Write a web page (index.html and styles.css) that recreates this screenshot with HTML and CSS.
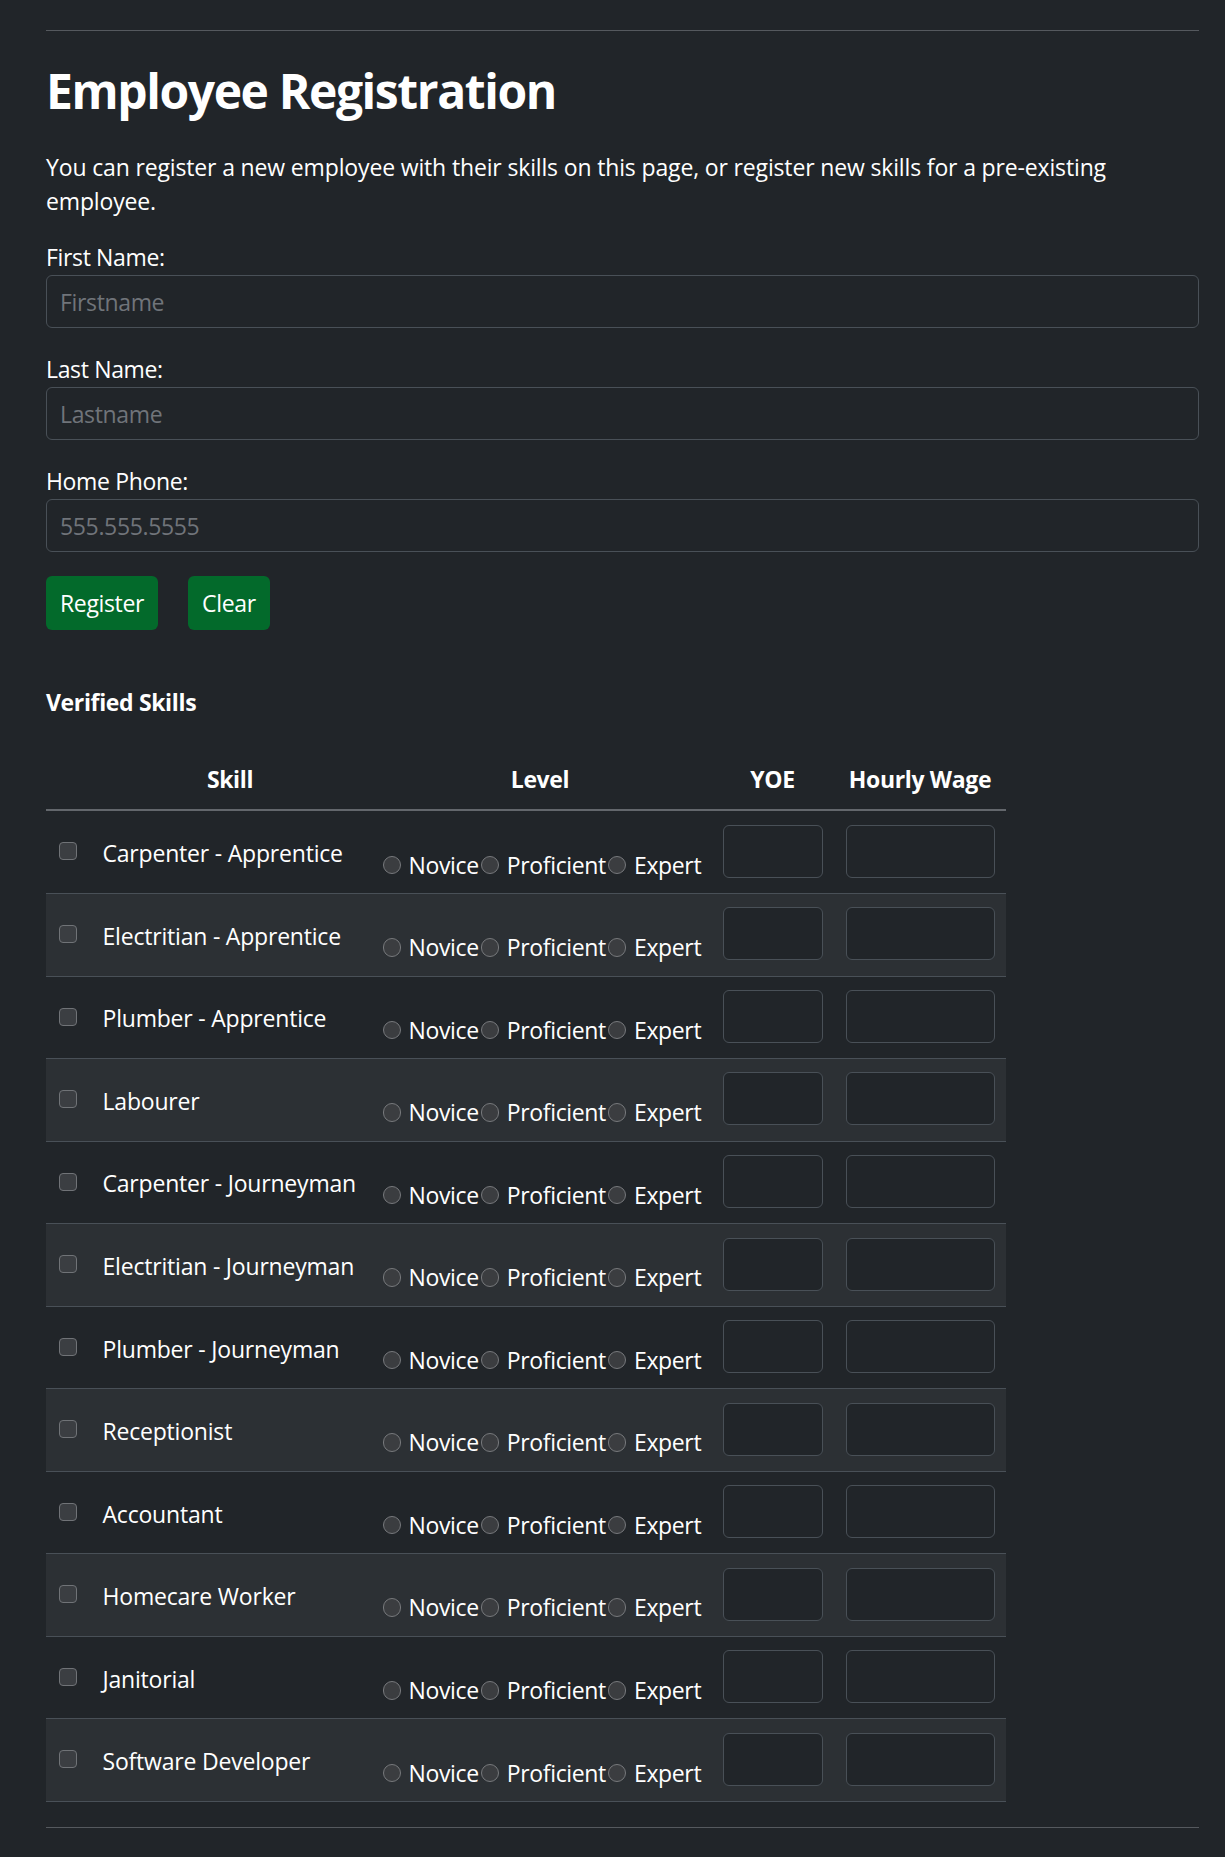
FILE: index.html
```html
<!DOCTYPE html>
<html lang="en">
<head>
<meta charset="utf-8">
<title>Employee Registration</title>
<link rel="stylesheet" href="styles.css">
</head>
<body>
<main class="page">
  <hr class="rule">
  <h1 class="title">Employee Registration</h1>
  <p class="intro">You can register a new employee with their skills on this page, or register new skills for a pre-existing employee.</p>
  <form class="reg">
    <div class="field">
      <label class="field-label" for="fn">First Name:</label>
      <input id="fn" class="text-input" type="text" placeholder="Firstname">
    </div>
    <div class="field">
      <label class="field-label" for="ln">Last Name:</label>
      <input id="ln" class="text-input" type="text" placeholder="Lastname">
    </div>
    <div class="field">
      <label class="field-label" for="ph">Home Phone:</label>
      <input id="ph" class="text-input" type="text" placeholder="555.555.5555">
    </div>
    <div class="actions">
      <button type="button" class="btn">Register</button>
      <button type="button" class="btn">Clear</button>
    </div>
    <h5 class="section-title">Verified Skills</h5>
    <table class="skills">
      <colgroup>
        <col class="c-check"><col class="c-skill"><col class="c-level"><col class="c-yoe"><col class="c-wage">
      </colgroup>
      <thead>
        <tr><th></th><th>Skill</th><th>Level</th><th>YOE</th><th>Hourly Wage</th></tr>
      </thead>
      <tbody>
        <tr><td class="t-check"><input type="checkbox" class="cb"></td><td class="t-skill">Carpenter - Apprentice</td><td class="t-level"><label class="opt"><input type="radio" name="l1">Novice</label><label class="opt"><input type="radio" name="l1">Proficient</label><label class="opt"><input type="radio" name="l1">Expert</label></td><td class="t-input"><input class="cell-input" type="text"></td><td class="t-input"><input class="cell-input" type="text"></td></tr>
        <tr><td class="t-check"><input type="checkbox" class="cb"></td><td class="t-skill">Electritian - Apprentice</td><td class="t-level"><label class="opt"><input type="radio" name="l2">Novice</label><label class="opt"><input type="radio" name="l2">Proficient</label><label class="opt"><input type="radio" name="l2">Expert</label></td><td class="t-input"><input class="cell-input" type="text"></td><td class="t-input"><input class="cell-input" type="text"></td></tr>
        <tr><td class="t-check"><input type="checkbox" class="cb"></td><td class="t-skill">Plumber - Apprentice</td><td class="t-level"><label class="opt"><input type="radio" name="l3">Novice</label><label class="opt"><input type="radio" name="l3">Proficient</label><label class="opt"><input type="radio" name="l3">Expert</label></td><td class="t-input"><input class="cell-input" type="text"></td><td class="t-input"><input class="cell-input" type="text"></td></tr>
        <tr><td class="t-check"><input type="checkbox" class="cb"></td><td class="t-skill">Labourer</td><td class="t-level"><label class="opt"><input type="radio" name="l4">Novice</label><label class="opt"><input type="radio" name="l4">Proficient</label><label class="opt"><input type="radio" name="l4">Expert</label></td><td class="t-input"><input class="cell-input" type="text"></td><td class="t-input"><input class="cell-input" type="text"></td></tr>
        <tr><td class="t-check"><input type="checkbox" class="cb"></td><td class="t-skill">Carpenter - Journeyman</td><td class="t-level"><label class="opt"><input type="radio" name="l5">Novice</label><label class="opt"><input type="radio" name="l5">Proficient</label><label class="opt"><input type="radio" name="l5">Expert</label></td><td class="t-input"><input class="cell-input" type="text"></td><td class="t-input"><input class="cell-input" type="text"></td></tr>
        <tr><td class="t-check"><input type="checkbox" class="cb"></td><td class="t-skill">Electritian - Journeyman</td><td class="t-level"><label class="opt"><input type="radio" name="l6">Novice</label><label class="opt"><input type="radio" name="l6">Proficient</label><label class="opt"><input type="radio" name="l6">Expert</label></td><td class="t-input"><input class="cell-input" type="text"></td><td class="t-input"><input class="cell-input" type="text"></td></tr>
        <tr><td class="t-check"><input type="checkbox" class="cb"></td><td class="t-skill">Plumber - Journeyman</td><td class="t-level"><label class="opt"><input type="radio" name="l7">Novice</label><label class="opt"><input type="radio" name="l7">Proficient</label><label class="opt"><input type="radio" name="l7">Expert</label></td><td class="t-input"><input class="cell-input" type="text"></td><td class="t-input"><input class="cell-input" type="text"></td></tr>
        <tr><td class="t-check"><input type="checkbox" class="cb"></td><td class="t-skill">Receptionist</td><td class="t-level"><label class="opt"><input type="radio" name="l8">Novice</label><label class="opt"><input type="radio" name="l8">Proficient</label><label class="opt"><input type="radio" name="l8">Expert</label></td><td class="t-input"><input class="cell-input" type="text"></td><td class="t-input"><input class="cell-input" type="text"></td></tr>
        <tr><td class="t-check"><input type="checkbox" class="cb"></td><td class="t-skill">Accountant</td><td class="t-level"><label class="opt"><input type="radio" name="l9">Novice</label><label class="opt"><input type="radio" name="l9">Proficient</label><label class="opt"><input type="radio" name="l9">Expert</label></td><td class="t-input"><input class="cell-input" type="text"></td><td class="t-input"><input class="cell-input" type="text"></td></tr>
        <tr><td class="t-check"><input type="checkbox" class="cb"></td><td class="t-skill">Homecare Worker</td><td class="t-level"><label class="opt"><input type="radio" name="l10">Novice</label><label class="opt"><input type="radio" name="l10">Proficient</label><label class="opt"><input type="radio" name="l10">Expert</label></td><td class="t-input"><input class="cell-input" type="text"></td><td class="t-input"><input class="cell-input" type="text"></td></tr>
        <tr><td class="t-check"><input type="checkbox" class="cb"></td><td class="t-skill">Janitorial</td><td class="t-level"><label class="opt"><input type="radio" name="l11">Novice</label><label class="opt"><input type="radio" name="l11">Proficient</label><label class="opt"><input type="radio" name="l11">Expert</label></td><td class="t-input"><input class="cell-input" type="text"></td><td class="t-input"><input class="cell-input" type="text"></td></tr>
        <tr><td class="t-check"><input type="checkbox" class="cb"></td><td class="t-skill">Software Developer</td><td class="t-level"><label class="opt"><input type="radio" name="l12">Novice</label><label class="opt"><input type="radio" name="l12">Proficient</label><label class="opt"><input type="radio" name="l12">Expert</label></td><td class="t-input"><input class="cell-input" type="text"></td><td class="t-input"><input class="cell-input" type="text"></td></tr>
      </tbody>
    </table>
  </form>
  <hr class="rule rule-bottom">
</main>
</body>
</html>
```

FILE: styles.css
```css
* { box-sizing: border-box; }

html, body {
  margin: 0;
  background: #212529;
}

body {
  color: #ffffff;
  font-family: "Open Sans", "Noto Sans", sans-serif;
  font-size: 23px;
  line-height: 34.5px;
  letter-spacing: -0.35px;
}

.page {
  width: 1199px;
  padding: 30px 0 30px 46px;
}

.rule {
  margin: 0;
  height: 0;
  border: 0;
  border-top: 1px solid #55595e;
}

.title {
  margin: 31px 0 29px;
  font-size: 48px;
  line-height: 58.8px;
  font-weight: 700;
  letter-spacing: -1.4px;
}

.intro {
  max-width: 1120px;
  margin: 0 0 21.7px;
  letter-spacing: -0.15px;
}

.reg {
  margin: 0;
}

.field {
  display: flex;
  flex-direction: column;
  margin-bottom: 24.3px;
}

.field-label {
  display: block;
}

.text-input {
  display: block;
  width: 100%;
  height: 53px;
  margin: 0;
  padding: 1px 13px 0;
  border: 1px solid #495057;
  border-radius: 6px;
  background: #212529;
  color: #ffffff;
  font: inherit;
  letter-spacing: -0.35px;
}

.text-input::placeholder {
  color: #70747a;
  opacity: 1;
}

.actions {
  display: flex;
  gap: 30px;
  margin-top: 24.4px;
}

.btn {
  height: 54px;
  padding: 0 14px;
  border: 0;
  border-radius: 6px;
  background: #036a2b;
  color: #ffffff;
  font: inherit;
  letter-spacing: -0.35px;
  cursor: pointer;
}

.section-title {
  margin: 55.5px 0 31px;
  font-size: 23px;
  line-height: 34.5px;
  font-weight: 700;
}

.skills {
  width: 960px;
  table-layout: fixed;
  border-collapse: separate;
  border-spacing: 0;
}

.c-check { width: 45px; }
.c-skill { width: 278px; }
.c-level { width: 342px; }
.c-yoe { width: 123px; }
.c-wage { width: 172px; }

.skills th {
  padding: 11.5px 11.5px 12.5px;
  border-bottom: 2px solid #63676c;
  font-weight: 700;
  text-align: center;
  vertical-align: bottom;
}

.skills tbody tr {
  height: 82.56px;
}

.skills td {
  padding: 0 11.5px;
  border-bottom: 1px solid #495057;
  vertical-align: top;
  white-space: nowrap;
}

.skills tbody tr:nth-child(even) td {
  background: #2c3034;
}

.t-check { padding-top: 31px !important; padding-left: 12.6px !important; }
.t-skill { padding-top: 24.8px !important; letter-spacing: -0.2px; }
.t-level { padding-top: 36.1px !important; }
.t-input { padding-top: 13.3px !important; }

.cb {
  display: block;
  appearance: none;
  width: 18px;
  height: 18px;
  margin: 0;
  border: 1.5px solid #707377;
  border-radius: 4px;
  background: #3b3e42;
}

.opt {
  display: inline-flex;
  align-items: center;
}

.opt input {
  appearance: none;
  flex: none;
  width: 18.5px;
  height: 18.5px;
  margin: 0 7.5px 0 2px;
  border: 1.5px solid #77797c;
  border-radius: 50%;
  background: #3b3d40;
}

.cell-input {
  display: block;
  width: 100%;
  height: 53px;
  margin: 0;
  padding: 0 10px;
  border: 1px solid #495057;
  border-radius: 6px;
  background: #212529;
  color: #ffffff;
  font: inherit;
}

.rule-bottom {
  margin-top: 24.5px;
}
```
